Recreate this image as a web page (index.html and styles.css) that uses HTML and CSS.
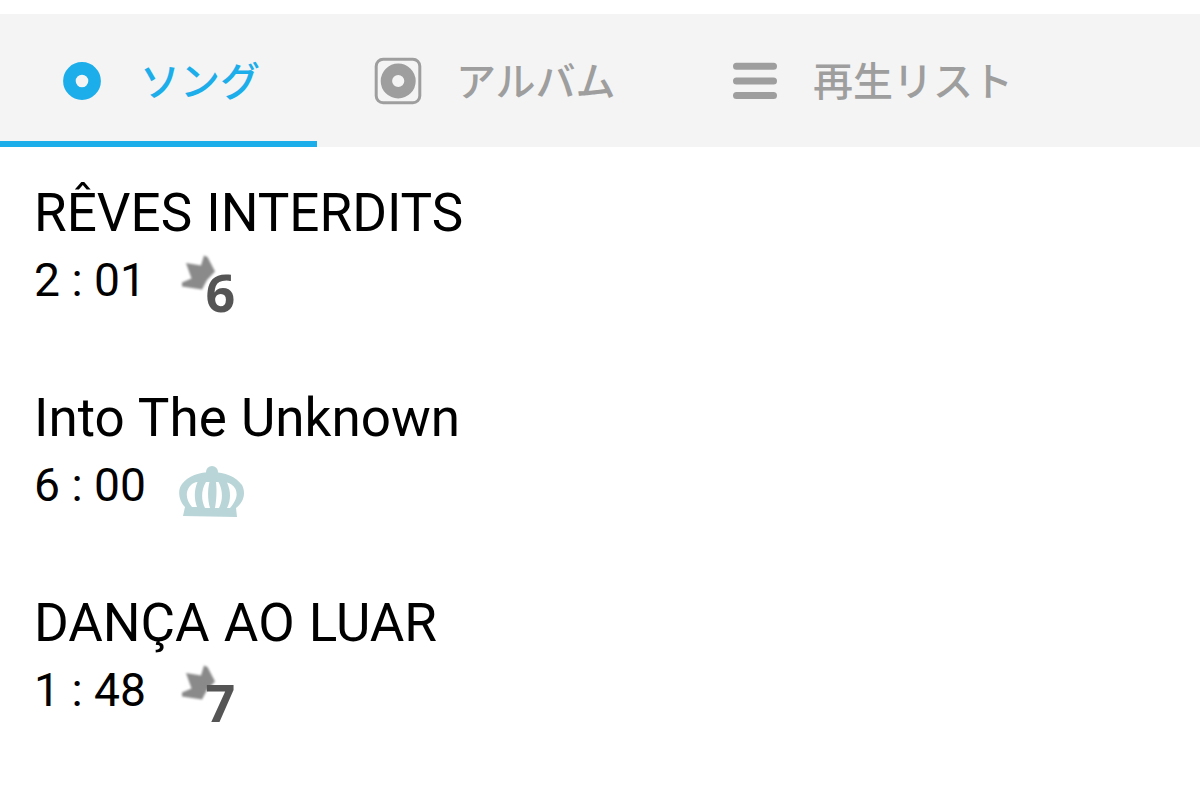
FILE: index.html
```html
<!DOCTYPE html>
<html lang="ja">
<head>
  <meta charset="UTF-8">
  <meta name="viewport" content="width=device-width, initial-scale=1.0">
  <title>ソング</title>
  <link rel="stylesheet" href="styles.css">
</head>
<body>
  <nav class="tabs">
    <a class="tab tab-songs active">
      <svg class="icon" width="48" height="48" viewBox="0 0 48 48">
        <circle cx="24" cy="24" r="12.6" fill="none" stroke="currentColor" stroke-width="12.6"/>
      </svg>
      <span class="label">ソング</span>
    </a>
    <a class="tab tab-albums">
      <svg class="icon" width="48" height="48" viewBox="0 0 48 48">
        <rect x="2.2" y="2.2" width="43.6" height="43.6" rx="7" fill="none" stroke="currentColor" stroke-width="3"/>
        <circle cx="24.2" cy="24" r="11.8" fill="none" stroke="currentColor" stroke-width="11.4"/>
      </svg>
      <span class="label">アルバム</span>
    </a>
    <a class="tab tab-playlists">
      <svg class="icon" width="48" height="48" viewBox="0 0 48 48">
        <path d="M5.500 9.300h37M5.500 24h37M5.500 38.500h37" stroke="currentColor" stroke-width="7" stroke-linecap="round"/>
      </svg>
      <span class="label">再生リスト</span>
    </a>
  </nav>

  <main class="songs">
    <div class="song">
      <div class="title">RÊVES INTERDITS</div>
      <div class="info">
        <span class="time">2 : 01</span>
        <svg class="badge" width="80" height="88" viewBox="0 0 80 88">
          <path class="leaf" d="M16 18L31 20.500L34 10.500L37.500 12L45 26.500L37 35L32 44.500L12 41.500V37.500L21.500 33.500Z"/>
          <text class="level" x="35.500" y="67">6</text>
        </svg>
      </div>
    </div>
    <div class="song">
      <div class="title">Into The Unknown</div>
      <div class="info">
        <span class="time">6 : 00</span>
        <svg class="badge" width="80" height="88" viewBox="0 0 80 88">
          <g class="crown">
            <circle cx="42" cy="22" r="6"/>
            <path fill-rule="evenodd" d="M13 66L15 57C9 51 7 40 12 34C18 26 29 22 42 22C55 22 66 27 72 35C76 43 74 52 66 58L67 67ZM22 57C16 50 15 42 20 36C23 33 25 32 27.500 32C24 40 24 49 27 57ZM35 58C31 50 31 40 36 32L39.500 32C37.500 40 37.500 49 40 58ZM46 32L48.500 32C53 40 53 50 49 58H45C46.500 49 47 41 46 32ZM57 32.500C60 33 63 35 65.500 39C68.500 46 65 52 60 58H57C61 50 61 41 57 32.500Z"/>
          </g>
        </svg>
      </div>
    </div>
    <div class="song">
      <div class="title">DANÇA AO LUAR</div>
      <div class="info">
        <span class="time">1 : 48</span>
        <svg class="badge" width="80" height="88" viewBox="0 0 80 88">
          <path class="leaf" d="M16 18L31 20.500L34 10.500L37.500 12L45 26.500L37 35L32 44.500L12 41.500V37.500L21.500 33.500Z"/>
          <text class="level" x="35.500" y="67">7</text>
        </svg>
      </div>
    </div>
  </main>
</body>
</html>
```
FILE: styles.css
```css
body {
  margin: 0;
  padding-top: 14px;
  background: #fff;
  color: #000;
  font-family: Roboto, "Noto Sans CJK JP", sans-serif;
}

.tabs {
  display: flex;
  height: 133px;
  background: #f4f4f4;
  color: #9e9e9e;
  font-family: "Noto Sans CJK JP", sans-serif;
  font-size: 40px;
  font-weight: 500;
  line-height: 60px;
}

.tab {
  display: flex;
  align-items: center;
  gap: 34px;
  box-sizing: border-box;
  border-bottom: 6px solid transparent;
  padding-top: 7px;
  white-space: nowrap;
}

.tab-songs {
  width: 317px;
  padding-left: 58px;
}

.tab-albums {
  width: 356px;
  padding-left: 57px;
}

.tab-playlists {
  width: 400px;
  padding-left: 58px;
}

.tab.active {
  color: #1caeea;
  border-bottom-color: #1caeea;
}

.icon {
  flex: none;
}

.label {
  padding-bottom: 4px;
}

.song {
  box-sizing: border-box;
  height: 205px;
  padding: 34px 0 0 34px;
}

.title {
  font-size: 53px;
  line-height: 64px;
  word-spacing: 1px;
}

.info {
  display: flex;
}

.time {
  width: 136px;
  padding-top: 7px;
  font-size: 46.200px;
  line-height: 56px;
}

.badge {
  overflow: visible;
}

.leaf {
  fill: #8a8a8a;
  filter: blur(0.8px);
}

.level {
  fill: #555;
  font-family: "Open Sans", sans-serif;
  font-size: 52px;
  font-weight: 700;
}

.crown {
  fill: #b9d5d7;
  filter: blur(0.6px);
}
```
